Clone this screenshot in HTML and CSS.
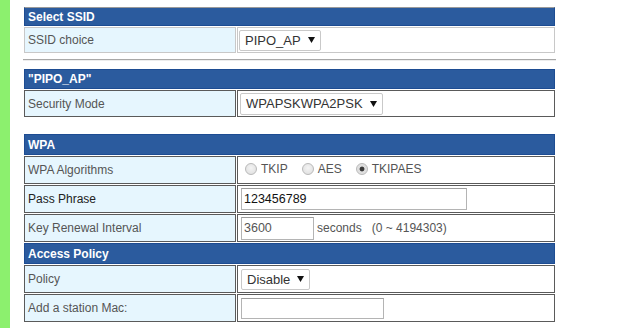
FILE: index.html
```html
<!DOCTYPE html>
<html>
<head>
<meta charset="utf-8">
<link rel="stylesheet" href="styles.css">
</head>
<body>
<div class="sidebar"></div>
<div class="main">
  <table class="tbl tbl-light t1">
    <colgroup><col class="c1"><col></colgroup>
    <tr><th colspan="2" class="hd hd-first">Select SSID</th></tr>
    <tr class="r26">
      <td class="lbl">SSID choice</td>
      <td class="val"><span class="sel sel-first">PIPO_AP<svg class="arr" width="7" height="6" viewBox="0 0 7 6"><polygon points="0,0 7,0 3.5,6" fill="#111"/></svg></span></td>
    </tr>
  </table>
  <hr class="sep">
  <table class="tbl tbl-dark t2">
    <colgroup><col class="c1"><col></colgroup>
    <tr><th colspan="2" class="hd">"PIPO_AP"</th></tr>
    <tr class="r27">
      <td class="lbl">Security Mode</td>
      <td class="val"><span class="sel sel-sec">WPAPSKWPA2PSK<svg class="arr" width="7" height="6" viewBox="0 0 7 6"><polygon points="0,0 7,0 3.5,6" fill="#111"/></svg></span></td>
    </tr>
  </table>
  <table class="tbl tbl-dark t3">
    <colgroup><col class="c1"><col></colgroup>
    <tr><th colspan="2" class="hd hd21">WPA</th></tr>
    <tr class="r28">
      <td class="lbl">WPA Algorithms</td>
      <td class="val">
        <span class="radios">
          <span class="opt"><span class="radio"></span>TKIP</span>
          <span class="opt"><span class="radio"></span>AES</span>
          <span class="opt"><span class="radio on"></span>TKIPAES</span>
        </span>
      </td>
    </tr>
    <tr class="r28">
      <td class="lbl lbl-dark">Pass Phrase</td>
      <td class="val"><span class="txt txt-pass">123456789</span></td>
    </tr>
    <tr class="r28">
      <td class="lbl">Key Renewal Interval</td>
      <td class="val"><span class="txt txt-key">3600</span><span class="unit">seconds &nbsp; (0 ~ 4194303)</span></td>
    </tr>
    <tr><th colspan="2" class="hd hd21">Access Policy</th></tr>
    <tr class="r28">
      <td class="lbl">Policy</td>
      <td class="val"><span class="sel sel-pol">Disable<svg class="arr" width="7" height="6" viewBox="0 0 7 6"><polygon points="0,0 7,0 3.5,6" fill="#111"/></svg></span></td>
    </tr>
    <tr class="r28">
      <td class="lbl">Add a station Mac:</td>
      <td class="val"><span class="txt txt-mac"></span></td>
    </tr>
  </table>
</div>
</body>
</html>
```
FILE: styles.css
```css
html, body {
  margin: 0;
  padding: 0;
  background: #fff;
}
body {
  display: flex;
  height: 328px;
  overflow: hidden;
  font-family: "Liberation Sans", Arial, sans-serif;
  font-size: 12px;
  color: #555;
}
.sidebar {
  flex: none;
  width: 10px;
  background: #8cf06e;
}
.main {
  flex: none;
  width: 533px;
  padding: 6px 0 0 13px;
}
.tbl {
  width: 533px;
  table-layout: fixed;
  border-collapse: separate;
  border-spacing: 1px;
}
.c1 { width: 212px; }
.tbl td, .tbl th {
  box-sizing: border-box;
  padding: 0 3px;
  vertical-align: middle;
  white-space: nowrap;
}
.hd {
  height: 20px;
  background: #2b5b9e;
  color: #fff;
  font-weight: bold;
  font-size: 12px;
  text-align: left;
  border: 1px solid #1d4c92;
  padding-left: 3px;
}
.hd-first { border-top-color: #9a9a9a; height: 19px; }
.hd21 { height: 21px; }
.r26 td { height: 26px; }
.r27 td { height: 27px; }
.r28 td { height: 28px; }
.lbl {
  background: #e6f6fe;
  color: #555;
}
.lbl-dark { color: #222; }
.tbl-light td { border: 1px solid #c8c8c8; }
.tbl-dark td { border: 1px solid #5a5a5a; }
.val { background: #fff; }
.sep {
  margin: 5px 0 7px 0;
  width: 533px;
  height: 0;
  border: 0;
  border-top: 1px solid #a8a8a8;
  border-bottom: 1px solid #ececec;
}
.t3 { margin-top: 15px; }

.sel {
  display: inline-flex;
  align-items: center;
  box-sizing: border-box;
  height: 21px;
  padding: 0 5px 0 5px;
  border: 1px solid #c9c9c9;
  border-radius: 2px;
  background: #fff;
  font-size: 13px;
  color: #333;
  vertical-align: middle;
}
.sel .arr { margin-left: 7px; }
.sel-first { margin-left: -2px; }
.sel-sec { margin-left: -1px; height: 22px; }

.txt {
  display: inline-block;
  box-sizing: border-box;
  height: 22px;
  line-height: 20px;
  padding: 0 2px;
  border: 1px solid #b4b4b4;
  border-top-color: #9c9c9c;
  font-size: 12.5px;
  color: #111;
  vertical-align: middle;
  background: #fff;
}
.txt-pass { width: 226px; }
.txt-key { width: 73px; color: #555; height: 23px; }
.txt-mac { width: 143px; height: 21px; }
.unit {
  margin-left: 3px;
  vertical-align: middle;
  color: #555;
}

.radios {
  display: inline-flex;
  align-items: center;
  margin-left: 4px;
}
.opt {
  display: inline-flex;
  align-items: center;
  margin-right: 14px;
  font-size: 12px;
  color: #555;
}
.radio {
  box-sizing: border-box;
  width: 12px;
  height: 12px;
  margin-right: 4px;
  border-radius: 50%;
  border: 1px solid #b9b9b9;
  background: radial-gradient(circle at 50% 40%, #f4f4f4 0, #dcdcdc 100%);
}
.radio.on {
  background: radial-gradient(circle, #3a3a3a 0, #3a3a3a 2px, #dcdcdc 2.8px, #e8e8e8 100%);
}
```
